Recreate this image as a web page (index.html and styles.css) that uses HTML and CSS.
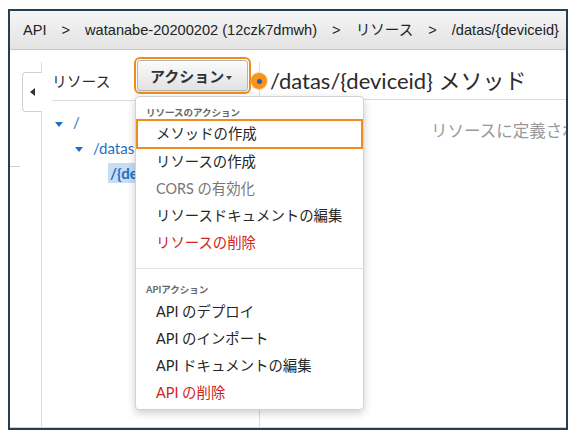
FILE: index.html
```html
<!DOCTYPE html>
<html lang="ja">
<head>
  <meta charset="UTF-8" />
  <meta name="viewport" content="width=device-width, initial-scale=1.0" />
  <title>API Gateway - リソース</title>
  <link rel="stylesheet" href="styles.css">
</head>
<body>
  <div class="console">
    <div class="breadcrumb">
      <span>API</span><span class="sep">&gt;</span><span>watanabe-20200202 (12czk7dmwh)</span><span class="sep">&gt;</span><span>リソース</span><span class="sep">&gt;</span><span>/datas/{deviceid}</span>
    </div>

    <div class="main">
      <div class="side">
        <div class="side-tab"><span class="arrow-left"></span></div>
        <div class="side-rule"></div>
      </div>

      <div class="resources">
        <div class="res-header">
          <span class="res-title">リソース</span>
          <button class="action-btn">アクション<span class="caret"></span></button>
        </div>
        <ul class="tree">
          <li class="lvl0"><span class="toggle"></span>/</li>
          <li class="lvl1"><span class="toggle"></span>/datas</li>
          <li class="lvl2"><span class="selected">/{deviceid}</span></li>
        </ul>

        <div class="menu">
          <div class="menu-head">リソースのアクション</div>
          <div class="menu-item is-focused">メソッドの作成</div>
          <div class="menu-item">リソースの作成</div>
          <div class="menu-item is-disabled">CORS の有効化</div>
          <div class="menu-item">リソースドキュメントの編集</div>
          <div class="menu-item is-danger">リソースの削除</div>
          <div class="menu-divider"></div>
          <div class="menu-head">APIアクション</div>
          <div class="menu-item">API のデプロイ</div>
          <div class="menu-item">API のインポート</div>
          <div class="menu-item">API ドキュメントの編集</div>
          <div class="menu-item is-danger">API の削除</div>
        </div>
      </div>

      <div class="methods">
        <span class="marker"></span>
        <h1 class="methods-title">/datas/{deviceid} メソッド</h1>
        <p class="empty">リソースに定義されたメソッドはありません</p>
      </div>
    </div>
  </div>
</body>
</html>
```

FILE: styles.css
```css
body {
  margin: 0;
  background-color: #ffffff;
  font-family: Lato, "Noto Sans CJK JP", sans-serif;
  color: #333;
}
.console {
  position: relative;
  margin: 9px 0 0 8px;
  width: 560px;
  height: 421px;
  box-sizing: border-box;
  border: 2px solid #233f50;
  background-color: #fff;
  overflow: hidden;
}
.breadcrumb {
  height: 38px;
  line-height: 38px;
  padding-left: 13px;
  border-bottom: 1px solid #c8c8c8;
  background: linear-gradient(#f5f5f5, #e3e3e3);
  font-family: "Liberation Sans", "Noto Sans CJK JP", sans-serif;
  font-size: 14.6px;
  color: #222;
  white-space: nowrap;
}
.breadcrumb .sep {
  margin: 0 15px;
}
.main {
  display: flex;
  height: 377px;
  border-bottom: 1px solid #d0d0d0;
}

/* collapsed side tab */
.side {
  flex: none;
  width: 31px;
}
.side-tab {
  position: relative;
  z-index: 1;
  margin: 22px 0 0 12px;
  width: 20px;
  height: 40px;
  box-sizing: border-box;
  border: 1px solid #cfcfcf;
  border-right: 0;
  border-radius: 4px 0 0 4px;
  background-color: #fff;
  display: flex;
  align-items: center;
  justify-content: center;
}
.arrow-left {
  width: 0;
  height: 0;
  border-top: 4px solid transparent;
  border-bottom: 4px solid transparent;
  border-right: 5px solid #333;
}
.side-rule {
  margin-top: 54px;
  width: 10px;
  height: 1px;
  background-color: #cfcfcf;
}

/* resources panel */
.resources {
  position: relative;
  flex: none;
  width: 218px;
  box-sizing: border-box;
  margin-top: 12px;
  border-left: 1px solid #dcdcdc;
}
.res-header {
  display: flex;
  align-items: flex-start;
  height: 38px;
  margin-left: 10px;
  border-bottom: 1px solid #dcdcdc;
}
.res-title {
  width: 85px;
  line-height: 38px;
  font-size: 14.8px;
  color: #2b2b2b;
}
.action-btn {
  margin-top: -2px;
  width: 111px;
  height: 31px;
  padding: 0 0 0 12px;
  text-align: left;
  font-family: Lato, "Noto Sans CJK JP", sans-serif;
  font-size: 15px;
  font-weight: bold;
  color: #333;
  background: linear-gradient(#fbfbfb, #e2e2e2);
  border: 1px solid #b4b4b4;
  border-radius: 3px;
  box-shadow: 0 1px 1px rgba(0,0,0,0.15);
  outline: 2px solid #f08c1e;
  outline-offset: 1px;
}
.caret {
  display: inline-block;
  margin-left: 2px;
  vertical-align: middle;
  border-left: 3.5px solid transparent;
  border-right: 3.5px solid transparent;
  border-top: 4px solid #444;
}
.tree {
  list-style: none;
  margin: 0;
  padding: 9px 0 0 0;
  font-size: 15px;
  color: #1f6fc0;
}
.tree li {
  line-height: 25.5px;
  white-space: nowrap;
}
.tree .lvl0 { padding-left: 13px; }
.tree .lvl1 { padding-left: 33px; }
.tree .lvl2 { padding-left: 66px; }
.toggle {
  display: inline-block;
  margin-right: 10px;
  vertical-align: middle;
  border-left: 4px solid transparent;
  border-right: 4px solid transparent;
  border-top: 5px solid #1f6fc0;
}
.selected {
  display: inline-block;
  line-height: 20px;
  padding: 0 2px;
  background-color: #c6ddf5;
  font-weight: bold;
}

/* actions dropdown */
.menu {
  position: absolute;
  z-index: 10;
  left: 93px;
  top: 34px;
  width: 229px;
  box-sizing: border-box;
  padding: 8px 0 3px;
  background-color: #fff;
  border: 1px solid #d3d3d3;
  border-radius: 4px;
  box-shadow: 0 3px 8px rgba(0,0,0,0.2);
}
.menu-head {
  line-height: 16px;
  padding-left: 10px;
  font-size: 9.5px;
  font-weight: bold;
  color: #666;
}
.menu-item {
  line-height: 27px;
  padding-left: 20px;
  font-size: 14.4px;
  color: #262626;
  white-space: nowrap;
}
.menu-item.is-focused {
  line-height: 26px;
  margin: -2px 0 -1px;
  padding-left: 18px;
  border: 2px solid #f08c1e;
}
.menu-item.is-disabled {
  color: #777;
}
.menu-item.is-danger {
  color: #d1241c;
}
.menu-divider {
  height: 1px;
  margin: 12px 0 13px;
  background-color: #e2e2e2;
}

/* methods panel */
.methods {
  position: relative;
  flex: 1;
  min-width: 0;
  margin-top: 12px;
  border-left: 1px solid #dcdcdc;
}
.marker {
  position: absolute;
  left: -9px;
  top: 11px;
  width: 16px;
  height: 16px;
  border-radius: 50%;
  background-color: #f7941d;
  box-shadow: 0 0 0 1px rgba(247,148,29,0.35);
}
.marker::after {
  content: "";
  position: absolute;
  left: 5.5px;
  top: 5.5px;
  width: 5px;
  height: 5px;
  border-radius: 50%;
  background-color: #1f5fbf;
}
.methods-title {
  margin: 0;
  padding-left: 10px;
  line-height: 37px;
  font-size: 22px;
  font-weight: normal;
  color: #2b2b2b;
  border-bottom: 1px solid #dcdcdc;
  white-space: nowrap;
}
.empty {
  margin: 21px 0 0;
  padding-left: 171px;
  line-height: 20px;
  font-size: 16.5px;
  color: #999;
  white-space: nowrap;
}
```
